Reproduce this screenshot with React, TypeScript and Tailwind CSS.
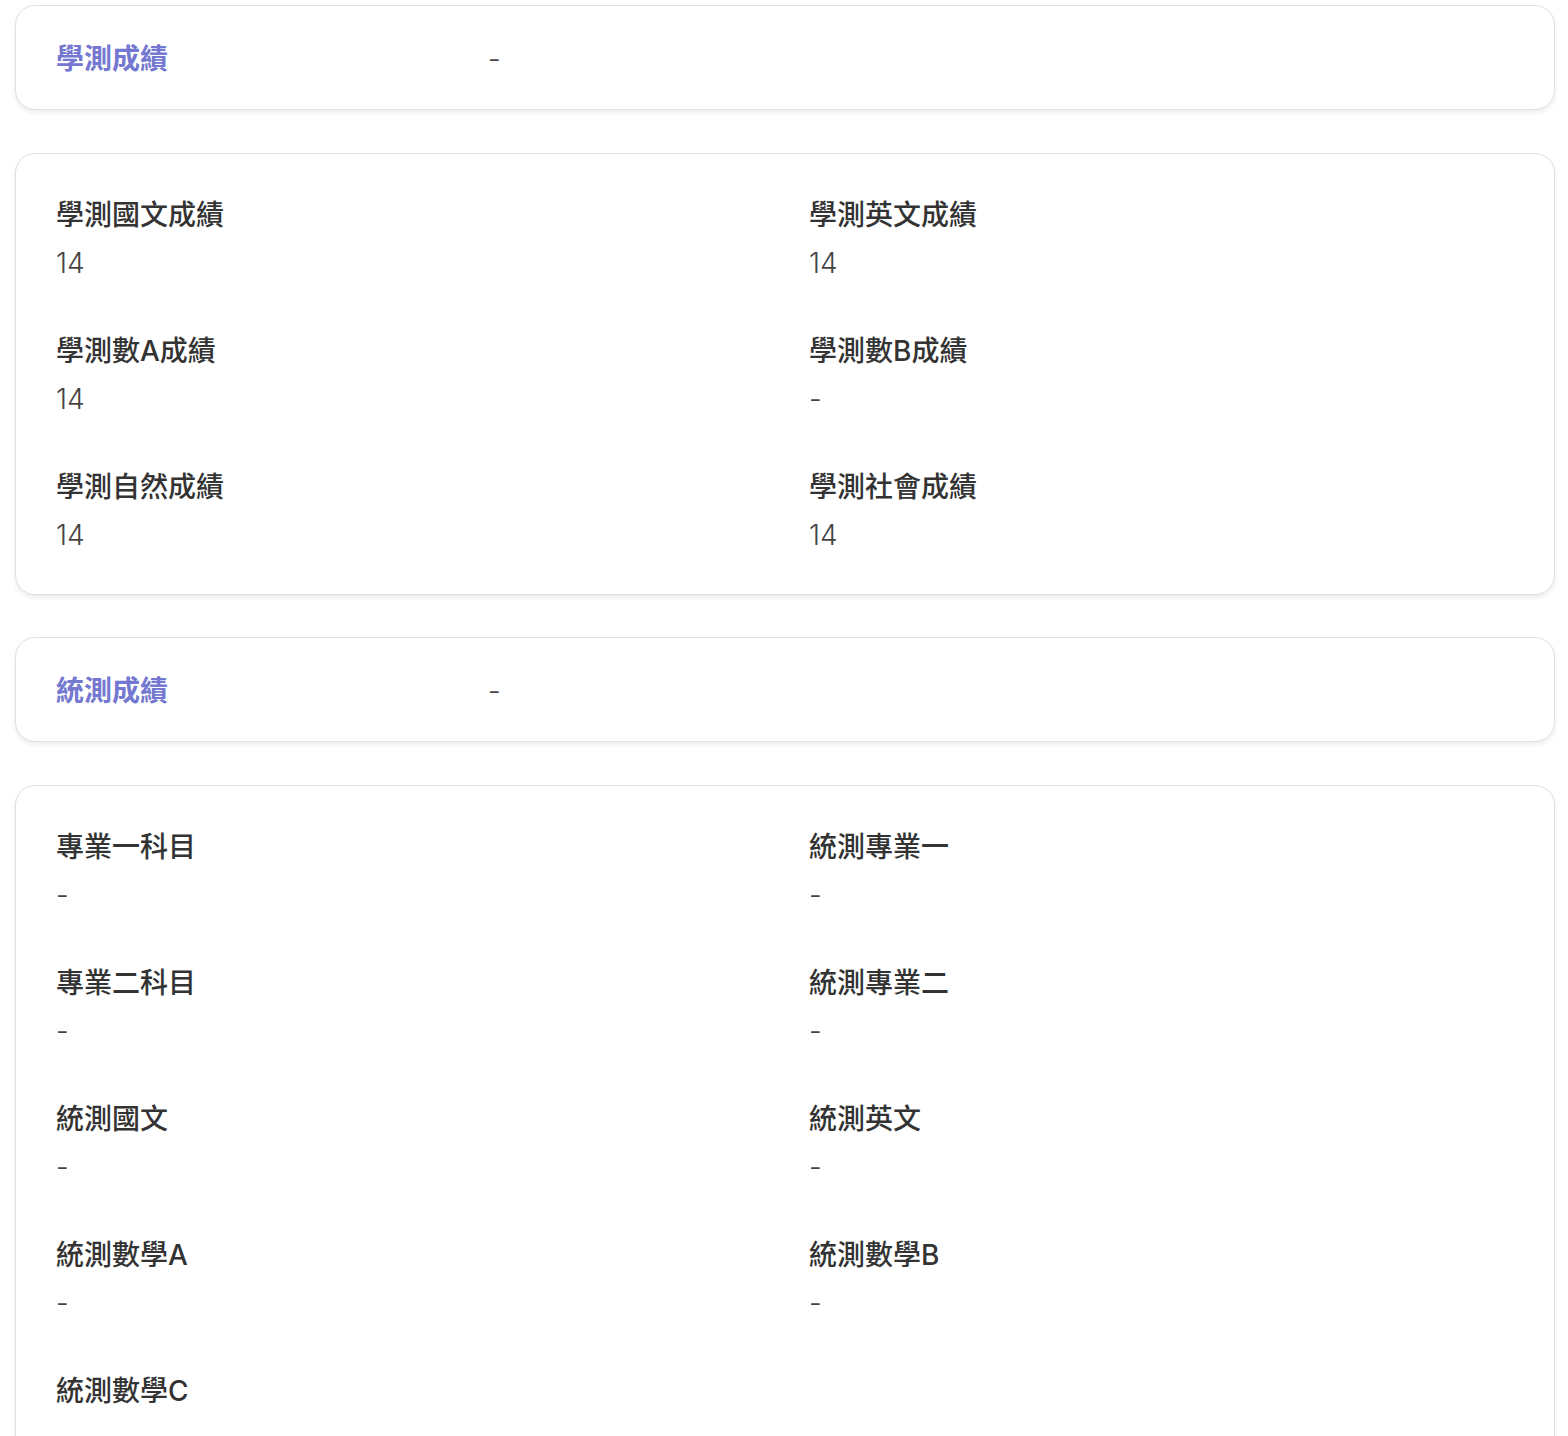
import React from "react";

const font = {
  fontFamily: '"Inter", "Noto Sans CJK TC", "Noto Sans", sans-serif',
};

type Field = { label: string; value: string };

const gsat: Field[] = [
  { label: "學測國文成績", value: "14" },
  { label: "學測英文成績", value: "14" },
  { label: "學測數A成績", value: "14" },
  { label: "學測數B成績", value: "-" },
  { label: "學測自然成績", value: "14" },
  { label: "學測社會成績", value: "14" },
];

const tcte: Field[] = [
  { label: "專業一科目", value: "-" },
  { label: "統測專業一", value: "-" },
  { label: "專業二科目", value: "-" },
  { label: "統測專業二", value: "-" },
  { label: "統測國文", value: "-" },
  { label: "統測英文", value: "-" },
  { label: "統測數學A", value: "-" },
  { label: "統測數學B", value: "-" },
  { label: "統測數學C", value: "-" },
];

function Card({ children, className = "" }: { children: React.ReactNode; className?: string }) {
  return (
    <div
      className={
        "rounded-[20px] border border-[#e0e0e0] bg-white shadow-[0_3px_5px_rgba(0,0,0,0.07)] " +
        className
      }
    >
      {children}
    </div>
  );
}

function SectionHeader({ title }: { title: string }) {
  return (
    <Card className="flex h-[105px] items-center pl-[40px] pt-[2px]">
      <div className="w-[432px] text-[28px] leading-[48px] font-semibold text-[#7478d0]">{title}</div>
      <div className="text-[28px] leading-[48px] font-light text-[#444]">-</div>
    </Card>
  );
}

function FieldGrid({ fields }: { fields: Field[] }) {
  return (
    <Card className="pt-[37px] pb-[35px] pl-[40px]">
      <div className="grid grid-cols-[753px_1fr] gap-y-[40px]">
        {fields.map((f) => (
          <div key={f.label} className="flex flex-col">
            <div className="text-[28px] leading-[48px] font-medium text-[#333]">{f.label}</div>
            <div className="text-[28px] leading-[48px] font-light text-[#444]">{f.value}</div>
          </div>
        ))}
      </div>
    </Card>
  );
}

export default function App() {
  return (
    <div style={font} className="min-h-screen bg-white pl-[15px] pr-[13px] pt-[5px] pb-10">
      <div className="flex flex-col gap-[42.5px]">
        <SectionHeader title="學測成績" />
        <FieldGrid fields={gsat} />
        <SectionHeader title="統測成績" />
        <FieldGrid fields={tcte} />
      </div>
    </div>
  );
}
